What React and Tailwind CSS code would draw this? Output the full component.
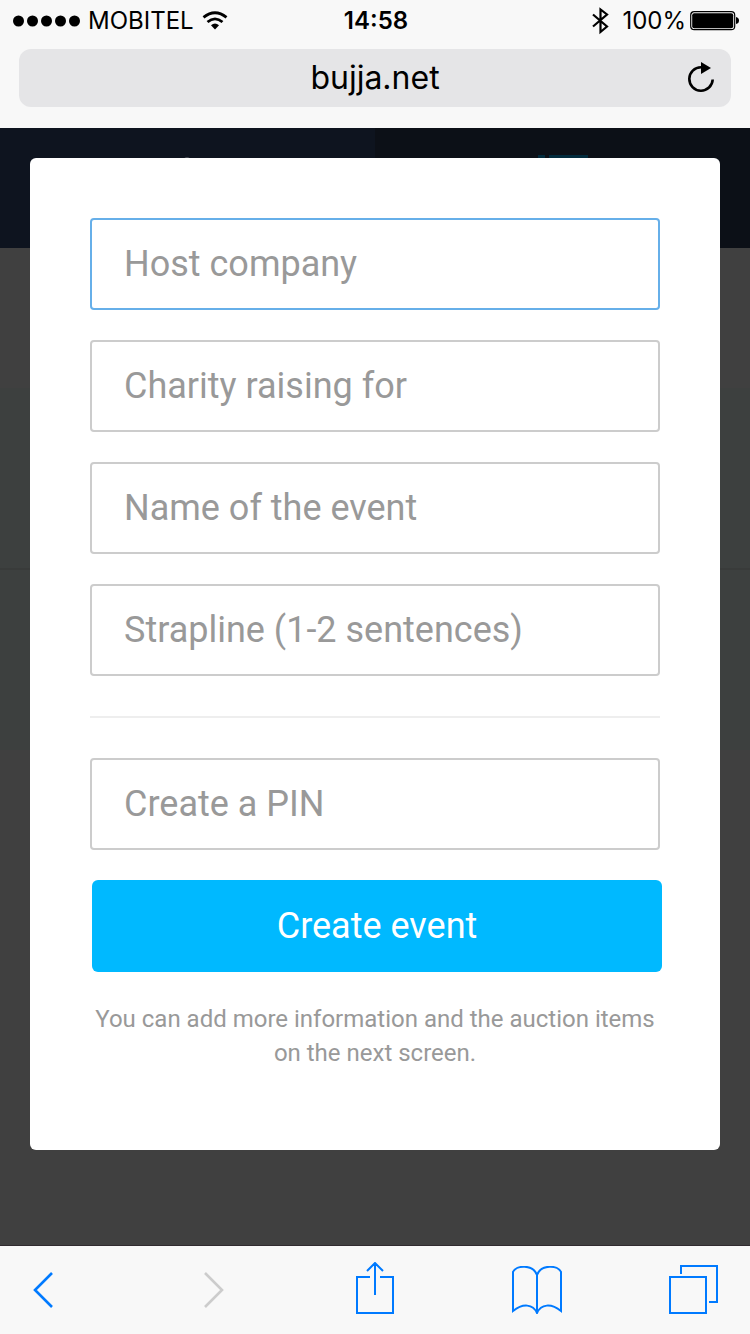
import React from "react";

function StatusBar() {
  return (
    <div className="grid h-10 grid-cols-3 items-center pl-3 pr-2.5 pt-0.5 font-['Inter',sans-serif] text-2xl/6 text-black">
      <div className="flex items-center gap-2">
        <svg className="h-3 w-17 shrink-0" viewBox="0 0 68 12" aria-hidden="true">
          <circle cx="6.5" cy="6" r="5.5" />
          <circle cx="20.5" cy="6" r="5.5" />
          <circle cx="34.5" cy="6" r="5.5" />
          <circle cx="48.5" cy="6" r="5.5" />
          <circle cx="62.5" cy="6" r="5.5" />
        </svg>
        <span>MOBITEL</span>
        <svg className="h-5 w-6.5 shrink-0" viewBox="0 0 26 20" fill="none" stroke="black" aria-hidden="true">
          <path d="M1.500 6.400Q13-3 24.500 6.400" strokeWidth="2.800" />
          <path d="M5.500 11Q13 4.600 20.500 11" strokeWidth="2.700" />
          <path d="M9 14.200Q13 10.600 17 14.200L13 18.400Z" fill="black" stroke="none" />
        </svg>
      </div>
      <div className="text-center font-semibold">14:58</div>
      <div className="flex items-center justify-end">
        <svg className="mr-3 h-7 w-5 shrink-0" viewBox="0 0 20 28" fill="none" stroke="black" strokeWidth="2.200" aria-hidden="true">
          <path d="M3 7.500L17 19.500L10.500 25V2.500L17 7.500L3 19.500" strokeLinejoin="miter" />
        </svg>
        <span>100%</span>
        <svg className="ml-1 h-5 w-12.5 shrink-0" viewBox="0 0 50 20" aria-hidden="true">
          <rect x="0.700" y="0.700" width="44" height="18" rx="3.500" fill="none" stroke="black" strokeWidth="1.200" />
          <rect x="2.200" y="2.200" width="41" height="15" rx="2" />
          <path d="M46 6Q49 6.500 49 9.500T46 13Z" />
        </svg>
      </div>
    </div>
  );
}

function AddressBar() {
  return (
    <div className="mx-[19px] mt-[9px] grid h-[58px] grid-cols-[48px_1fr_48px] items-center rounded-xl bg-[#e5e5e7]">
      <span />
      <span className="text-center font-['Inter',sans-serif] text-[32px]/10 text-black">bujja.net</span>
      <button type="button" aria-label="Reload" className="flex justify-end pr-4">
        <svg className="h-8 w-7" viewBox="0 0 28 32" fill="none" aria-hidden="true">
          <path d="M14 5.300A11.700 11.700 0 1 0 25.700 17.500" stroke="black" strokeWidth="2.600" />
          <path d="M14 0L24 6L14 12Z" fill="black" />
        </svg>
      </button>
    </div>
  );
}

function PageBehind() {
  return (
    <div className="absolute inset-0 flex flex-col bg-[#404040]" aria-hidden="true">
      <div className="grid h-30 shrink-0 grid-cols-2">
        <div className="flex items-start justify-center bg-[#0e141f] pt-7">
          <svg className="h-8 w-8" viewBox="0 0 32 32">
            <circle cx="15" cy="4" r="3" fill="#4a5058" />
          </svg>
        </div>
        <div className="flex items-start justify-center bg-[#0c1017] pt-[27px]">
          <svg className="h-8 w-12.5" viewBox="0 0 50 32" fill="#022b3d">
            <rect width="7" height="6" />
            <rect x="11" width="39" height="6" />
          </svg>
        </div>
      </div>
      <div className="mt-35 h-[180px] shrink-0 bg-[#3d403f]" />
      <div className="h-[182px] shrink-0 border-t-2 border-[#393b3a] bg-[#3d403f]" />
    </div>
  );
}

function Field({ name, label, active }) {
  return (
    <input
      name={name}
      type="text"
      aria-label={label}
      placeholder={label}
      className={
        "block h-23 w-full rounded-sm border-2 bg-white px-8 text-4xl text-[#333333] outline-none placeholder:text-[#999999] " +
        (active ? "border-[#66afe9]" : "border-[#cccccc]")
      }
    />
  );
}

function EventForm() {
  return (
    <form
      className="relative mx-[30px] mt-[30px] rounded-md bg-white px-[60px] pt-[60px] pb-20 font-['Roboto',sans-serif]"
      onSubmit={(e) => e.preventDefault()}
    >
      <div className="flex flex-col gap-[30px]">
        <Field name="host" label="Host company" active />
        <Field name="charity" label="Charity raising for" />
        <Field name="event" label="Name of the event" />
        <Field name="strapline" label="Strapline (1-2 sentences)" />
      </div>
      <hr className="my-10 border-t-2 border-[#eeeeee]" />
      <div className="flex flex-col gap-[30px]">
        <Field name="pin" label="Create a PIN" />
        <button type="submit" className="ml-0.5 -mr-0.5 h-23 rounded-md bg-[#00b9ff] text-4xl text-white">
          Create event
        </button>
        <p className="text-center text-2xl/[34px] text-[#999999]">
          You can add more information and the auction items on the next screen.
        </p>
      </div>
    </form>
  );
}

function Toolbar() {
  return (
    <nav className="flex h-[89px] items-center justify-between border-t border-[#302b2f] bg-[#f8f8f8] px-8">
      <button type="button" aria-label="Back" className="flex w-10 justify-start">
        <svg className="h-10 w-6 shrink-0" viewBox="0 0 24 40" fill="none" stroke="#007aff" strokeWidth="2.600" aria-hidden="true">
          <path d="M20 3L3 20L20 37" />
        </svg>
      </button>
      <button type="button" aria-label="Forward" disabled className="flex w-10 justify-center">
        <svg className="h-10 w-6 shrink-0" viewBox="0 0 24 40" fill="none" stroke="#cccccc" strokeWidth="2.600" aria-hidden="true">
          <path d="M3 3L20 20L3 37" />
        </svg>
      </button>
      <button type="button" aria-label="Share" className="flex w-10 justify-center">
        <svg className="h-14 w-10 shrink-0" viewBox="0 0 40 56" fill="none" stroke="#007aff" strokeWidth="2" aria-hidden="true">
          <path d="M15 15H2V51H38V15H25M20 33V1M12 9L20 1L28 9" />
        </svg>
      </button>
      <button type="button" aria-label="Bookmarks" className="flex w-10 justify-center">
        <svg className="h-12 w-13 shrink-0" viewBox="0 0 52 48" fill="none" stroke="#007aff" strokeWidth="2" aria-hidden="true">
          <path d="M26 9V47M26 9C22-2 5-1 2 6V45C12 37 22 38 26 47C30 38 40 37 50 45V6C47-1 30-2 26 9Z" />
        </svg>
      </button>
      <button type="button" aria-label="Tabs" className="flex w-10 justify-end">
        <svg className="h-[50px] w-[50px] shrink-0" viewBox="0 0 50 50" fill="none" stroke="#007aff" strokeWidth="2" aria-hidden="true">
          <path d="M2 12H38V48H2ZM13 9V1H49V37H41" />
        </svg>
      </button>
    </nav>
  );
}

export default function App() {
  return (
    <div className="flex min-h-screen flex-col bg-[#f8f8f8]">
      <header className="pb-[21px]">
        <StatusBar />
        <AddressBar />
      </header>
      <main className="relative flex-1">
        <PageBehind />
        <EventForm />
      </main>
      <Toolbar />
    </div>
  );
}
